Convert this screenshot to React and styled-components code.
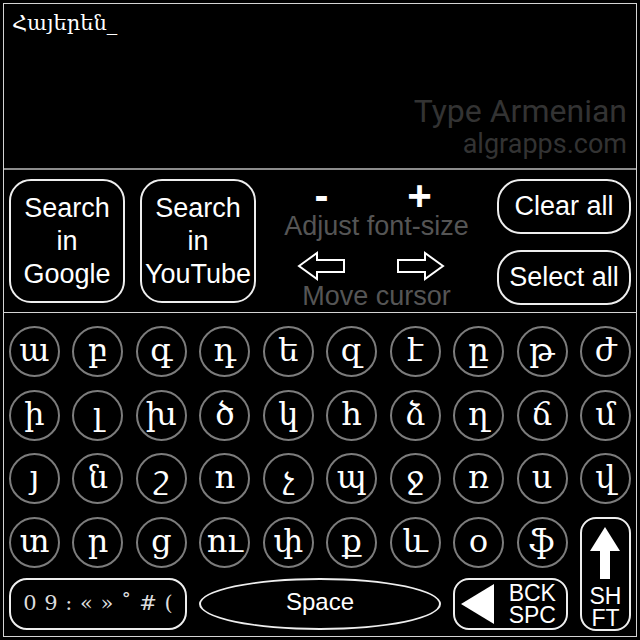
import React from "react"
import styled, { createGlobalStyle } from "styled-components"

const rows = [
  ["ա", "բ", "գ", "դ", "ե", "զ", "է", "ը", "թ", "ժ"],
  ["ի", "լ", "խ", "ծ", "կ", "հ", "ձ", "ղ", "ճ", "մ"],
  ["յ", "ն", "շ", "ո", "չ", "պ", "ջ", "ռ", "ս", "վ"],
  ["տ", "ր", "ց", "ու", "փ", "ք", "և", "օ", "ֆ"],
]

const App = () => {
  return (
    <>
      <Global />
      <Frame>
        <Display>
          <Typed>Հայերեն_</Typed>
          <Brand>
            <BrandTitle>Type Armenian</BrandTitle>
            <BrandSite>algrapps.com</BrandSite>
          </Brand>
        </Display>

        <Panel>
          <SearchBtn>Search<br />in<br />Google</SearchBtn>
          <SearchBtn>Search<br />in<br />YouTube</SearchBtn>
          <Middle>
            <SignRow>
              <Sign>-</Sign>
              <Sign>+</Sign>
            </SignRow>
            <Hint>Adjust font-size</Hint>
            <ArrowRow>
              <ArrowCell>
                <svg width="50" height="30" viewBox="0 0 50 30">
                  <polygon points="2,15 20,2 20,9 47,9 47,21 20,21 20,28" fill="none" stroke="#fff" strokeWidth="2" />
                </svg>
              </ArrowCell>
              <ArrowCell>
                <svg width="50" height="30" viewBox="0 0 50 30">
                  <polygon points="48,15 30,2 30,9 3,9 3,21 30,21 30,28" fill="none" stroke="#fff" strokeWidth="2" />
                </svg>
              </ArrowCell>
            </ArrowRow>
            <Hint>Move cursor</Hint>
          </Middle>
          <Side>
            <Pill>Clear all</Pill>
            <Pill>Select all</Pill>
          </Side>
        </Panel>

        <Keyboard>
          {rows.flat().map((ch, i) => (
            <Key key={i}>{ch}</Key>
          ))}
          <Shift>
            <svg width="32" height="52" viewBox="0 0 32 52">
              <polygon points="16,0 31,24 21,24 21,52 11,52 11,24 1,24" fill="#fff" />
            </svg>
            <KeyLabel>SH<br />FT</KeyLabel>
          </Shift>
          <Symbols>0 9 : « » ˚ # (</Symbols>
          <Space>Space</Space>
          <Back>
            <svg width="34" height="40" viewBox="0 0 34 40">
              <polygon points="0,20 33,0 33,40" fill="#fff" />
            </svg>
            <KeyLabel>BCK<br />SPC</KeyLabel>
          </Back>
        </Keyboard>
      </Frame>
    </>
  )
}

export default App

const Global = createGlobalStyle`
  html, body {
    margin: 0;
    padding: 0;
    background: #000;
  }
  * { box-sizing: border-box; }
`

const Frame = styled.div`
  margin: 3px;
  width: 634px;
  height: 634px;
  border: 1px solid #d4d4d4;
  display: flex;
  flex-direction: column;
  background: #000;
`

const Display = styled.div`
  height: 166px;
  border-bottom: 2px solid #8c8c8c;
  display: flex;
  flex-direction: column;
  justify-content: space-between;
  padding: 6px 9px 8px 8px;
`

const Typed = styled.div`
  color: #fff;
  font-family: "DejaVu Serif", serif;
  font-size: 21px;
  line-height: 26px;
`

const Brand = styled.div`
  display: flex;
  flex-direction: column;
  align-items: flex-end;
  font-family: Roboto, "Liberation Sans", sans-serif;
  color: #333;
`

const BrandTitle = styled.div`
  font-size: 32px;
  line-height: 34px;
`

const BrandSite = styled.div`
  font-size: 27px;
  line-height: 32px;
`

const Panel = styled.div`
  height: 143px;
  border-bottom: 1px solid #d4d4d4;
  display: flex;
  align-items: flex-start;
  padding: 9px 5px 0 5px;
  font-family: "Liberation Sans", Arial, sans-serif;
  color: #fff;
`

const SearchBtn = styled.div`
  width: 116px;
  height: 124px;
  margin-right: 15px;
  border: 2px solid #eee;
  border-radius: 22px;
  display: flex;
  align-items: center;
  justify-content: center;
  text-align: center;
  font-size: 27px;
  line-height: 33px;
`

const Middle = styled.div`
  flex: 1;
  margin-left: -15px;
  display: flex;
  flex-direction: column;
  align-items: center;
`

const SignRow = styled.div`
  height: 34px;
  display: flex;
  gap: 38px;
  margin-right: 12px;
`

const Sign = styled.div`
  width: 60px;
  text-align: center;
  font-size: 42px;
  font-weight: bold;
  line-height: 34px;
`

const Hint = styled.div`
  color: #555;
  font-size: 27px;
  line-height: 26px;
  white-space: nowrap;
`

const ArrowRow = styled.div`
  height: 44px;
  padding-top: 12px;
  display: flex;
  gap: 38px;
  margin-right: 12px;
`

const ArrowCell = styled.div`
  width: 60px;
  display: flex;
  justify-content: center;
`

const Side = styled.div`
  width: 134px;
  display: flex;
  flex-direction: column;
  gap: 16px;
`

const Pill = styled.div`
  height: 55px;
  border: 2px solid #eee;
  border-radius: 24px;
  display: flex;
  align-items: center;
  justify-content: center;
  font-size: 27px;
`

const Keyboard = styled.div`
  flex: 1;
  display: grid;
  grid-template-columns: repeat(10, 51px);
  grid-template-rows: repeat(4, 51px) 53px;
  justify-content: space-between;
  row-gap: 12.6px;
  padding: 13px 5px 0 5px;
  color: #fff;
`

const Key = styled.div`
  width: 51px;
  height: 51px;
  border: 2px solid #7c7c7c;
  border-radius: 50%;
  display: flex;
  align-items: center;
  justify-content: center;
  font-family: "DejaVu Serif", serif;
  font-size: 32px;
  line-height: 1;
  padding-bottom: 3px;
`

const KeyLabel = styled.div`
  font-family: "Liberation Sans", Arial, sans-serif;
  font-size: 23px;
  line-height: 22px;
  text-align: center;
`

const Shift = styled.div`
  grid-column: 10;
  grid-row: 4 / span 2;
  height: 114px;
  border: 2px solid #eee;
  border-radius: 16px;
  display: flex;
  flex-direction: column;
  align-items: center;
  padding-top: 8px;
  gap: 6px;
`

const BottomKey = styled.div`
  grid-row: 5;
  align-self: start;
  margin-top: -2px;
  height: 52px;
  border: 2px solid #eee;
  display: flex;
  align-items: center;
  justify-content: center;
`

const Symbols = styled(BottomKey)`
  grid-column: 1 / span 3;
  border-radius: 18px;
  font-family: "DejaVu Serif", serif;
  font-size: 21px;
  color: #ddd;
  word-spacing: 1px;
  padding-bottom: 2px;
`

const Space = styled(BottomKey)`
  grid-column: 4 / span 4;
  border-radius: 50%;
  font-family: "Liberation Sans", Arial, sans-serif;
  font-size: 24px;
  padding-bottom: 4px;
`

const Back = styled(BottomKey)`
  grid-column: 8 / span 2;
  border-radius: 16px;
  gap: 14px;
  padding-right: 4px;
`
